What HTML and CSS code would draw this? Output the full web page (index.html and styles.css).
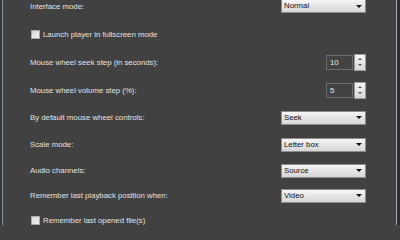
FILE: index.html
```html
<!DOCTYPE html>
<html>
<head>
<meta charset="utf-8">
<link rel="stylesheet" href="styles.css">
</head>
<body>
<div class="frame">
  <div class="edge-left"></div>
  <div class="panel">
    <div class="rows">
      <div class="row h28"><span class="label">Interface mode:</span><div class="combo"><span>Normal</span><i class="arrow"></i></div></div>
      <div class="row h28"><label class="check"><span class="box"></span><span class="label">Launch player in fullscreen mode</span></label></div>
      <div class="row h28"><span class="label">Mouse wheel seek step (in seconds):</span><div class="spin"><span class="field">10</span><span class="btns"><i class="up"></i><i class="down"></i></span></div></div>
      <div class="row h28"><span class="label">Mouse wheel volume step (%):</span><div class="spin"><span class="field">5</span><span class="btns"><i class="up"></i><i class="down"></i></span></div></div>
      <div class="row h27"><span class="label">By default mouse wheel controls:</span><div class="combo"><span>Seek</span><i class="arrow"></i></div></div>
      <div class="row h27"><span class="label">Scale mode:</span><div class="combo"><span>Letter box</span><i class="arrow"></i></div></div>
      <div class="row h25"><span class="label">Audio channels:</span><div class="combo"><span>Source</span><i class="arrow"></i></div></div>
      <div class="row h25"><span class="label">Remember last playback position when:</span><div class="combo"><span>Video</span><i class="arrow"></i></div></div>
      <div class="row h25"><label class="check"><span class="box"></span><span class="label">Remember last opened file(s)</span></label></div>
    </div>
  </div>
  <div class="edge-right"></div>
</div>
</body>
</html>
```
FILE: styles.css
```css
html, body {
  margin: 0;
  padding: 0;
  width: 400px;
  height: 225px;
  overflow: hidden;
  background: #414141;
}
.frame {
  display: flex;
  width: 400px;
  height: 225px;
  font-family: "Liberation Sans", Arial, sans-serif;
  font-size: 7.8px;
}
.edge-left {
  width: 2px;
  background: #353538;
  border-right: 1px solid #8a92a4;
}
.panel {
  flex: 1;
  background: #414141;
  overflow: hidden;
}
.edge-right {
  width: 3px;
  background: #2e2e2e;
  border-left: 1px solid #a9aeb8;
}
.rows {
  margin-top: -8px;
  padding-left: 27px;
  width: 336px;
}
.row {
  display: flex;
  align-items: center;
  justify-content: space-between;
}
.h28 { height: 28px; }
.h27 { height: 27px; }
.h25 { height: 25px; }
.label {
  color: #e2e2e2;
  white-space: nowrap;
}
.check {
  display: flex;
  align-items: center;
  gap: 3px;
  margin-left: 1px;
}
.box {
  width: 7px;
  height: 7px;
  border: 1px solid #a8a8a8;
  background: linear-gradient(135deg, #d8d8d8, #f4f4f4);
}
.combo {
  width: 81px;
  height: 12px;
  border: 1px solid #8c8c8c;
  background: linear-gradient(#f6f6f6, #e4e4e4 50%, #d6d6d6);
  display: flex;
  align-items: center;
  justify-content: space-between;
  padding-left: 2px;
  box-sizing: content-box;
  color: #111;
}
.combo span {
  line-height: 12px;
}
.arrow {
  width: 0;
  height: 0;
  border-left: 3px solid transparent;
  border-right: 3px solid transparent;
  border-top: 3px solid #111;
  margin-right: 3px;
}
.spin {
  display: flex;
  align-items: center;
  gap: 1px;
}
.field {
  width: 22px;
  height: 13px;
  border: 1px solid #6c6c6c;
  background: #434343;
  color: #ececec;
  padding-left: 3px;
  line-height: 13px;
  box-sizing: content-box;
}
.btns {
  width: 10px;
  height: 13px;
  border: 1px solid #9a9a9a;
  background: linear-gradient(#f4f4f4, #d8d8d8);
  display: flex;
  flex-direction: column;
  align-items: center;
  justify-content: space-around;
  padding: 1px 0;
  box-sizing: content-box;
}
.up, .down {
  width: 0;
  height: 0;
  border-left: 2px solid transparent;
  border-right: 2px solid transparent;
}
.up { border-bottom: 2px solid #555; }
.down { border-top: 2px solid #555; }
```
